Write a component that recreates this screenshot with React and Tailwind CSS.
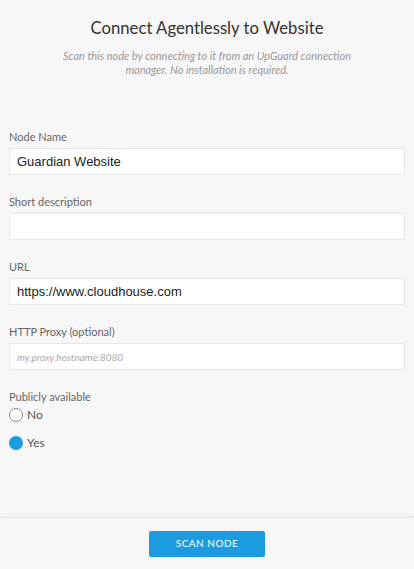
import { useState } from "react";

const fields = [
  { label: "Node Name", value: "Guardian Website" },
  { label: "Short description", value: "" },
  { label: "URL", value: "https://www.cloudhouse.com" },
  { label: "HTTP Proxy (optional)", value: "", placeholder: "my.proxy.hostname:8080" },
];

function Radio({ checked, label, onClick }) {
  return (
    <button
      type="button"
      onClick={onClick}
      className="flex items-center gap-[4px] h-[20px] text-[12px] text-[#555]"
    >
      <span
        className={
          checked
            ? "w-[14px] h-[14px] rounded-full bg-[#1b9be0]"
            : "w-[14px] h-[14px] rounded-full border border-[#888] bg-white"
        }
      />
      {label}
    </button>
  );
}

export default function App() {
  const [values, setValues] = useState(fields.map((f) => f.value));
  const [isPublic, setIsPublic] = useState(true);

  return (
    <div className="h-[569px] flex flex-col bg-[#f7f7f7] font-['Lato',sans-serif]">
      <div className="flex-1 px-[9px]">
        <div className="text-center pt-[17px]">
          <h1 className="text-[16.7px] leading-[22px] text-[#333]">
            Connect Agentlessly to Website
          </h1>
          <p className="mx-auto mt-[10px] max-w-[330px] text-[11px] leading-[14px] italic text-[#999]">
            Scan this node by connecting to it from an UpGuard connection
            manager. No installation is required.
          </p>
        </div>

        <form className="mt-[52px]" onSubmit={(e) => e.preventDefault()}>
          {fields.map((f, i) => (
            <div key={f.label} className="mb-[19px]">
              <label className="block text-[11px] leading-[16px] text-[#666] mb-[3px]">
                {f.label}
              </label>
              <input
                value={values[i]}
                placeholder={f.placeholder}
                onChange={(e) => {
                  const next = [...values];
                  next[i] = e.target.value;
                  setValues(next);
                }}
                className="block w-full h-[27px] bg-white border border-[#e8e8e8] pl-[7px] text-[13px] text-[#222] font-['Liberation_Sans',Arial,sans-serif] outline-none placeholder:font-['Lato',sans-serif] placeholder:italic placeholder:text-[10px] placeholder:text-[#aaa]"
              />
            </div>
          ))}

          <div className="text-[11px] leading-[16px] text-[#666]">
            Publicly available
          </div>
          <div className="flex flex-col items-start gap-[8px]">
            <Radio checked={!isPublic} label="No" onClick={() => setIsPublic(false)} />
            <Radio checked={isPublic} label="Yes" onClick={() => setIsPublic(true)} />
          </div>
        </form>
      </div>

      <div className="h-[52px] shrink-0 flex items-center justify-center border-t border-[#e6e6e6] shadow-[0_-3px_4px_rgba(0,0,0,0.04)]">
        <button
          type="button"
          className="w-[116px] h-[26px] rounded-[2px] bg-[#1c9be1] text-white text-[10px] tracking-[0.5px] uppercase"
        >
          Scan Node
        </button>
      </div>
    </div>
  );
}
